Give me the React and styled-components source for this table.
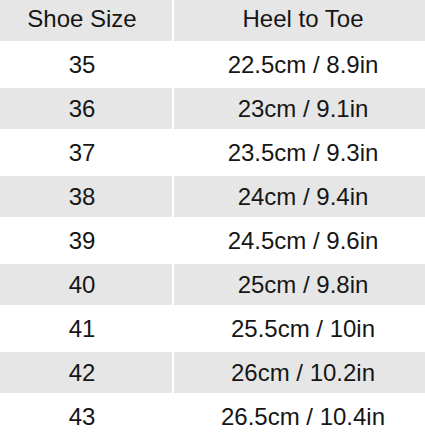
import React from 'react';
import styled, { createGlobalStyle } from 'styled-components';

const GlobalStyle = createGlobalStyle`
	body {
		margin: 0;
		background: #ffffff;
		font-family: 'Liberation Sans', Arial, sans-serif;
	}
`;

const sizes = [
	['35', '22.5cm / 8.9in'],
	['36', '23cm / 9.1in'],
	['37', '23.5cm / 9.3in'],
	['38', '24cm / 9.4in'],
	['39', '24.5cm / 9.6in'],
	['40', '25cm / 9.8in'],
	['41', '25.5cm / 10in'],
	['42', '26cm / 10.2in'],
	['43', '26.5cm / 10.4in'],
];

const App = () => {
	return (
		<>
			<GlobalStyle />
			<SizeTable>
				<Cell shaded head first>
					Shoe Size
				</Cell>
				<Cell shaded head>
					Heel to Toe
				</Cell>
				{sizes.map(([size, length], i) => (
					<React.Fragment key={size}>
						<Cell shaded={i % 2 === 1} first>
							{size}
						</Cell>
						<Cell shaded={i % 2 === 1}>{length}</Cell>
					</React.Fragment>
				))}
			</SizeTable>
		</>
	);
};

export default App;

const SizeTable = styled.div`
	display: grid;
	grid-template-columns: 172px 1fr;
	grid-auto-rows: 41px;
	column-gap: 2px;
	row-gap: 3px;
	width: 425px;
`;

const Cell = styled.div`
	align-items: center;
	background: ${(p) => (p.shaded ? '#e6e6e6' : '#ffffff')};
	color: #161616;
	display: flex;
	font-size: 24px;
	justify-content: center;
	padding: ${(p) => (p.first ? '0 8px 0 0' : '0 0 0 7px')};
	padding-bottom: ${(p) => (p.head ? '4px' : '0')};
`;
